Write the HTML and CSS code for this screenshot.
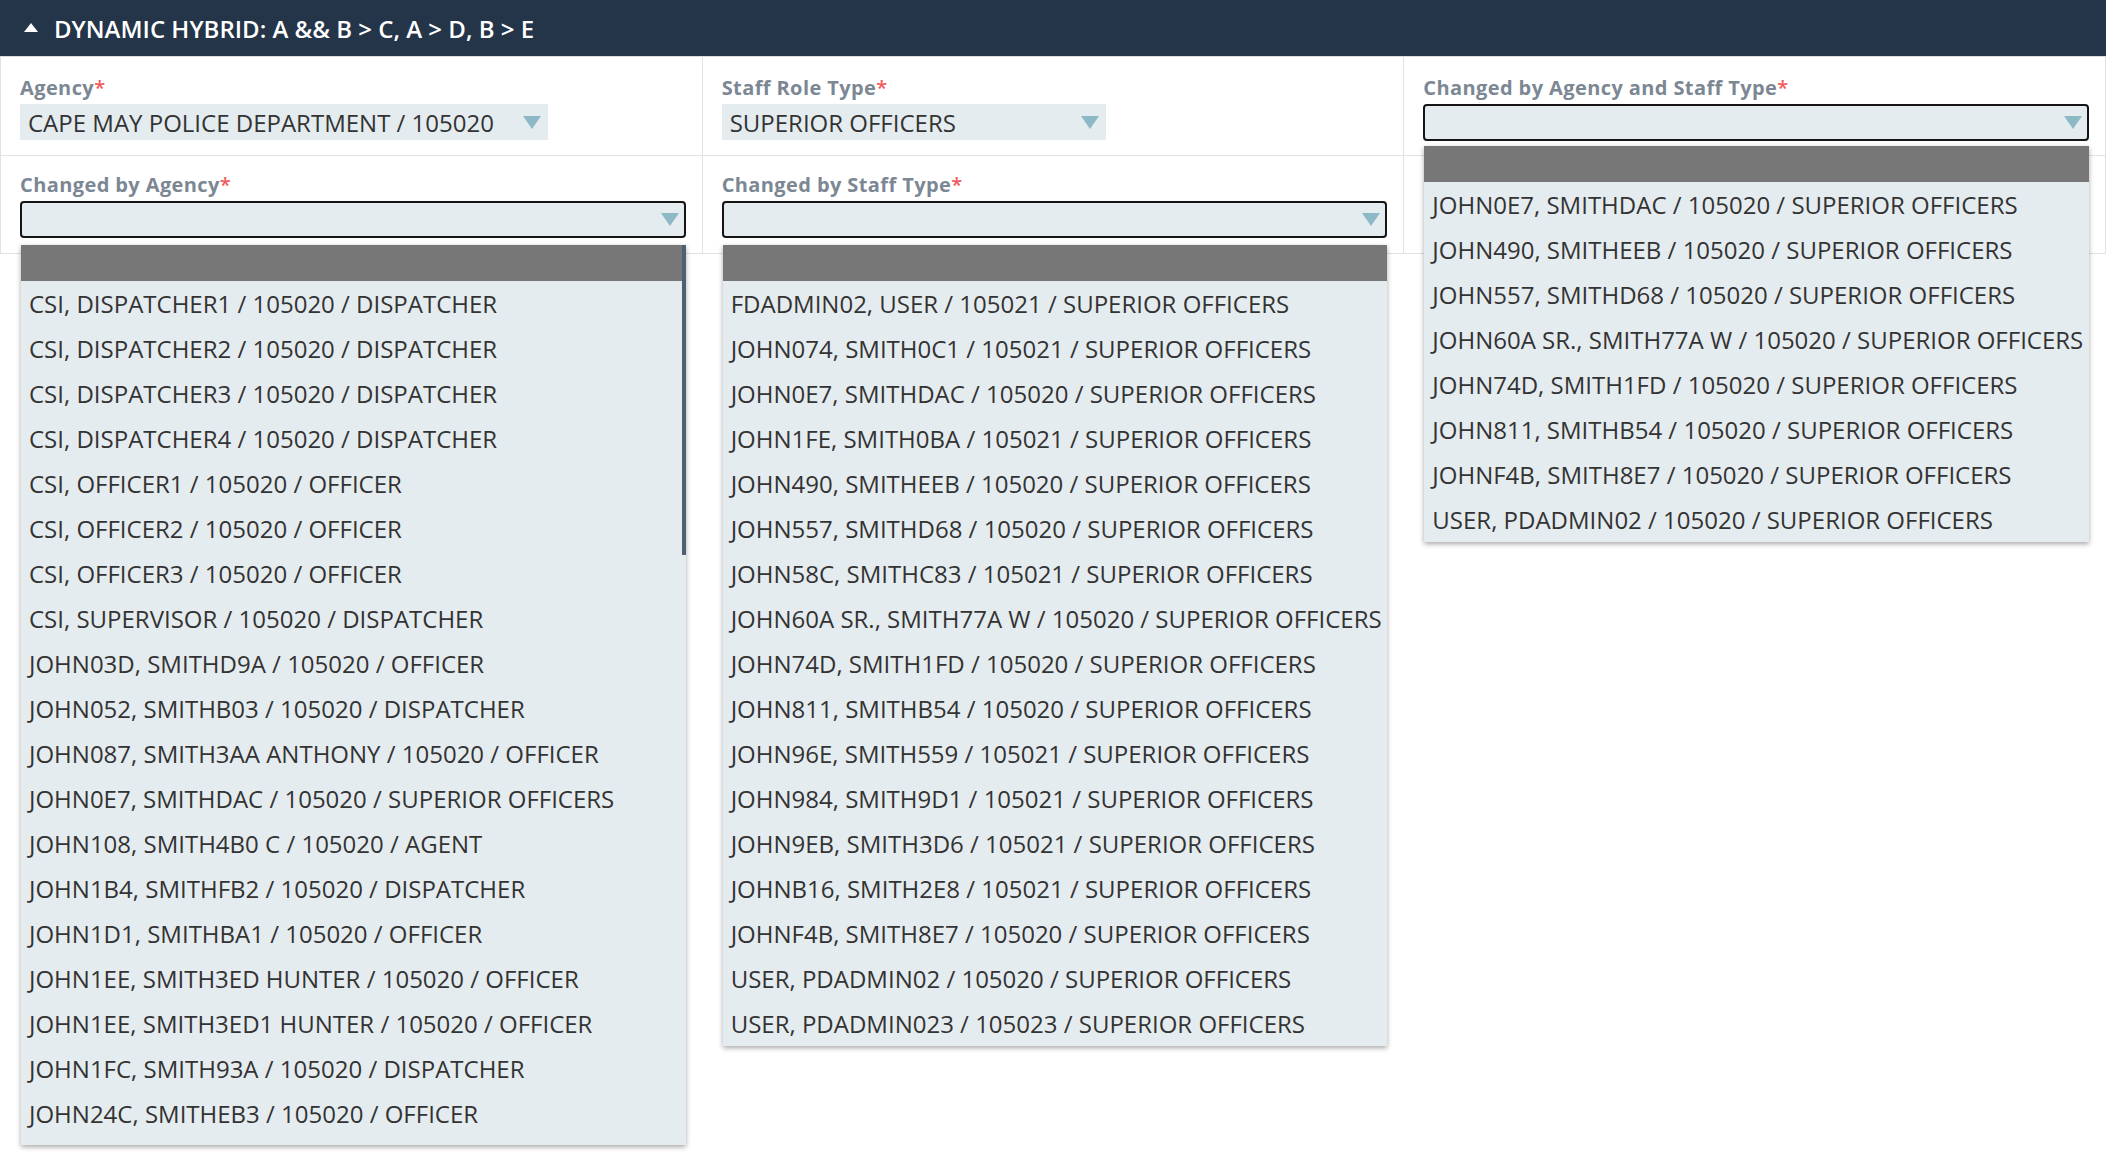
FILE: index.html
```html
<!DOCTYPE html>
<html lang="en">
<head>
<meta charset="utf-8">
<title>Dynamic Hybrid</title>
<link rel="stylesheet" href="styles.css">
</head>
<body>
<section class="panel">
  <header class="panel-header">
    <span class="caret"></span>
    <span class="panel-title">DYNAMIC HYBRID: A &amp;&amp; B &gt; C, A &gt; D, B &gt; E</span>
  </header>
  <div class="grid">
    <div class="cell">
      <label class="field-label">Agency<span class="req">*</span></label>
      <div class="select select-agency"><span class="select-value">CAPE MAY POLICE DEPARTMENT / 105020</span><span class="arrow"></span></div>
    </div>
    <div class="cell">
      <label class="field-label">Staff Role Type<span class="req">*</span></label>
      <div class="select select-role"><span class="select-value">SUPERIOR OFFICERS</span><span class="arrow"></span></div>
    </div>
    <div class="cell">
      <label class="field-label">Changed by Agency and Staff Type<span class="req">*</span></label>
      <div class="combo combo-top">
        <div class="select select-open"><span class="select-value"></span><span class="arrow"></span></div>
        <ul class="options">
          <li class="opt opt-empty"></li>
          <li class="opt">JOHN0E7, SMITHDAC / 105020 / SUPERIOR OFFICERS</li>
          <li class="opt">JOHN490, SMITHEEB / 105020 / SUPERIOR OFFICERS</li>
          <li class="opt">JOHN557, SMITHD68 / 105020 / SUPERIOR OFFICERS</li>
          <li class="opt">JOHN60A SR., SMITH77A W / 105020 / SUPERIOR OFFICERS</li>
          <li class="opt">JOHN74D, SMITH1FD / 105020 / SUPERIOR OFFICERS</li>
          <li class="opt">JOHN811, SMITHB54 / 105020 / SUPERIOR OFFICERS</li>
          <li class="opt">JOHNF4B, SMITH8E7 / 105020 / SUPERIOR OFFICERS</li>
          <li class="opt">USER, PDADMIN02 / 105020 / SUPERIOR OFFICERS</li>
        </ul>
      </div>
    </div>
    <div class="cell cell-r2">
      <label class="field-label">Changed by Agency<span class="req">*</span></label>
      <div class="combo">
        <div class="select select-open"><span class="select-value"></span><span class="arrow"></span></div>
        <div class="options-wrap scrolling">
          <ul class="options">
            <li class="opt opt-empty"></li>
            <li class="opt">CSI, DISPATCHER1 / 105020 / DISPATCHER</li>
            <li class="opt">CSI, DISPATCHER2 / 105020 / DISPATCHER</li>
            <li class="opt">CSI, DISPATCHER3 / 105020 / DISPATCHER</li>
            <li class="opt">CSI, DISPATCHER4 / 105020 / DISPATCHER</li>
            <li class="opt">CSI, OFFICER1 / 105020 / OFFICER</li>
            <li class="opt">CSI, OFFICER2 / 105020 / OFFICER</li>
            <li class="opt">CSI, OFFICER3 / 105020 / OFFICER</li>
            <li class="opt">CSI, SUPERVISOR / 105020 / DISPATCHER</li>
            <li class="opt">JOHN03D, SMITHD9A / 105020 / OFFICER</li>
            <li class="opt">JOHN052, SMITHB03 / 105020 / DISPATCHER</li>
            <li class="opt">JOHN087, SMITH3AA ANTHONY / 105020 / OFFICER</li>
            <li class="opt">JOHN0E7, SMITHDAC / 105020 / SUPERIOR OFFICERS</li>
            <li class="opt">JOHN108, SMITH4B0 C / 105020 / AGENT</li>
            <li class="opt">JOHN1B4, SMITHFB2 / 105020 / DISPATCHER</li>
            <li class="opt">JOHN1D1, SMITHBA1 / 105020 / OFFICER</li>
            <li class="opt">JOHN1EE, SMITH3ED HUNTER / 105020 / OFFICER</li>
            <li class="opt">JOHN1EE, SMITH3ED1 HUNTER / 105020 / OFFICER</li>
            <li class="opt">JOHN1FC, SMITH93A / 105020 / DISPATCHER</li>
            <li class="opt">JOHN24C, SMITHEB3 / 105020 / OFFICER</li>
          </ul>
          <span class="scroll-thumb"></span>
        </div>
      </div>
    </div>
    <div class="cell cell-r2">
      <label class="field-label">Changed by Staff Type<span class="req">*</span></label>
      <div class="combo">
        <div class="select select-open"><span class="select-value"></span><span class="arrow"></span></div>
        <ul class="options">
          <li class="opt opt-empty"></li>
          <li class="opt">FDADMIN02, USER / 105021 / SUPERIOR OFFICERS</li>
          <li class="opt">JOHN074, SMITH0C1 / 105021 / SUPERIOR OFFICERS</li>
          <li class="opt">JOHN0E7, SMITHDAC / 105020 / SUPERIOR OFFICERS</li>
          <li class="opt">JOHN1FE, SMITH0BA / 105021 / SUPERIOR OFFICERS</li>
          <li class="opt">JOHN490, SMITHEEB / 105020 / SUPERIOR OFFICERS</li>
          <li class="opt">JOHN557, SMITHD68 / 105020 / SUPERIOR OFFICERS</li>
          <li class="opt">JOHN58C, SMITHC83 / 105021 / SUPERIOR OFFICERS</li>
          <li class="opt">JOHN60A SR., SMITH77A W / 105020 / SUPERIOR OFFICERS</li>
          <li class="opt">JOHN74D, SMITH1FD / 105020 / SUPERIOR OFFICERS</li>
          <li class="opt">JOHN811, SMITHB54 / 105020 / SUPERIOR OFFICERS</li>
          <li class="opt">JOHN96E, SMITH559 / 105021 / SUPERIOR OFFICERS</li>
          <li class="opt">JOHN984, SMITH9D1 / 105021 / SUPERIOR OFFICERS</li>
          <li class="opt">JOHN9EB, SMITH3D6 / 105021 / SUPERIOR OFFICERS</li>
          <li class="opt">JOHNB16, SMITH2E8 / 105021 / SUPERIOR OFFICERS</li>
          <li class="opt">JOHNF4B, SMITH8E7 / 105020 / SUPERIOR OFFICERS</li>
          <li class="opt">USER, PDADMIN02 / 105020 / SUPERIOR OFFICERS</li>
          <li class="opt">USER, PDADMIN023 / 105023 / SUPERIOR OFFICERS</li>
        </ul>
      </div>
    </div>
    <div class="cell cell-r2"></div>
  </div>
</section>
</body>
</html>
```

FILE: styles.css
```css
* { box-sizing: border-box; }

html, body {
  margin: 0;
  padding: 0;
  background: #ffffff;
}

body {
  font-family: "Open Sans", "Liberation Sans", sans-serif;
  color: #333333;
  width: 2106px;
  height: 1163px;
  overflow: hidden;
}

.panel {
  width: 2106px;
}

.panel-header {
  height: 57px;
  background: #243449;
  border-bottom: 1px solid #dcdcdc;
  display: flex;
  align-items: center;
  padding-left: 24px;
  color: #ffffff;
}

.caret {
  width: 0;
  height: 0;
  border-left: 7px solid transparent;
  border-right: 7px solid transparent;
  border-bottom: 9px solid #ffffff;
  margin-right: 16px;
  margin-top: -1px;
}

.panel-title {
  font-size: 24px;
  font-weight: 600;
}

.grid {
  display: grid;
  grid-template-columns: repeat(3, 1fr);
  border-left: 1px solid #e2e2e2;
}

.cell {
  border-right: 1px solid #e2e2e2;
  border-bottom: 1px solid #e2e2e2;
  padding: 19px 16px 14px 19px;
  min-height: 98px;
}

.cell-r2 {
  padding-top: 17px;
}

.field-label {
  display: block;
  font-size: 20px;
  line-height: 24px;
  font-weight: 700;
  letter-spacing: 0.4px;
  color: #7c8794;
  margin-bottom: 4px;
}

.req {
  color: #f25a5a;
  font-weight: 600;
}

.select {
  display: flex;
  align-items: center;
  height: 36px;
  background: #e4ecf0;
  padding: 0 7px 0 8px;
  font-size: 24px;
  color: #333333;
}

.select-value {
  flex: 1;
  white-space: nowrap;
  overflow: hidden;
}

.select-agency { width: 528px; }
.select-role { width: 384px; }

.select-open {
  width: 100%;
  height: 37px;
  border: 2px solid #151515;
  border-radius: 4px;
  padding: 0 5px 0 6px;
}

.arrow {
  width: 0;
  height: 0;
  border-left: 9px solid transparent;
  border-right: 9px solid transparent;
  border-top: 13px solid #8db8c6;
  flex: none;
}

.combo {
  position: relative;
}

.options,
.options-wrap {
  position: absolute;
  top: calc(100% + 7px);
  left: 1px;
  right: 0;
  margin: 0;
  padding: 0;
  list-style: none;
  background: #e5ecf0;
  box-shadow: 0 2px 5px rgba(0, 0, 0, 0.35);
  z-index: 5;
}

.combo-top .options {
  top: calc(100% + 5px);
}

.options-wrap .options {
  position: static;
  box-shadow: none;
}

.scrolling {
  height: 900px;
  overflow: hidden;
}

.scroll-thumb {
  position: absolute;
  top: 0;
  right: 0;
  width: 4px;
  height: 310px;
  background: #4f6075;
}

.opt {
  height: 45px;
  line-height: 45px;
  padding-left: 8px;
  font-size: 24px;
  color: #333333;
  white-space: nowrap;
  overflow: hidden;
}

.opt-empty {
  height: 36px;
  background: #777777;
}
```
